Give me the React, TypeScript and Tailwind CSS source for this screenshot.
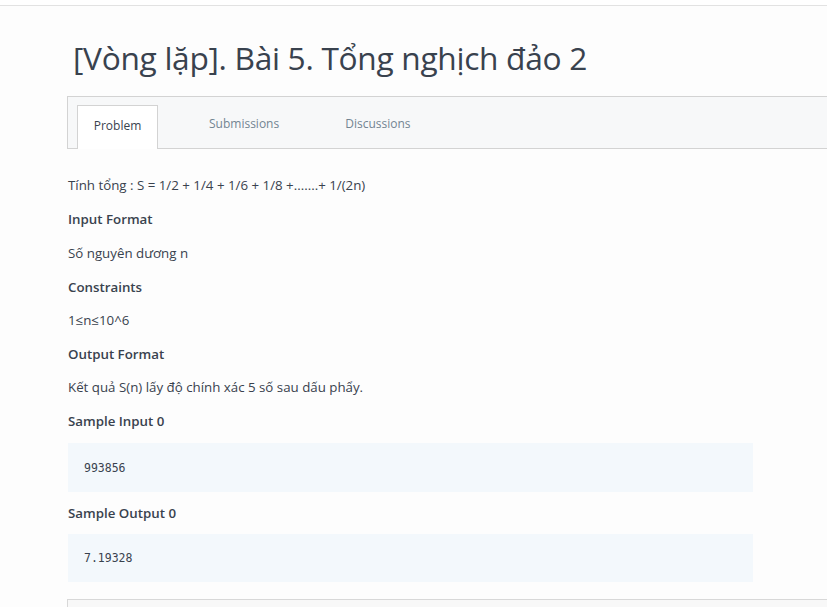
import React from "react";

const font = { fontFamily: '"Open Sans", "Noto Sans", sans-serif' };
const mono = { fontFamily: '"DejaVu Sans Mono", "Liberation Mono", monospace' };

export default function App() {
  return (
    <div className="w-[827px] h-[607px] overflow-hidden bg-[#fdfdfd] text-[#39424e]" style={font}>
      <div className="h-[6px] border-b border-[#e2e2e2] bg-white" />
      <h1 className="ml-[73px] mt-[30px] h-[44px] text-[31.7px] leading-[44px] font-normal tracking-[-0.3px] text-[#39424e]">
        [Vòng lặp]. Bài 5. Tổng nghịch đảo 2
      </h1>
      <div className="ml-[67px] mt-[16px] h-[53px] border-t border-l border-b border-[#d3d3d3] bg-[#f7f8f9] flex items-end pl-[9px]">
        <div className="w-[81px] h-[44px] -mb-px pb-[4px] bg-white border border-b-0 border-[#d3d3d3] flex items-center justify-center text-[12px] font-medium text-[#39424e]">
          Problem
        </div>
        <div className="h-[44px] pb-[4px] flex items-center ml-[51px] text-[12px] font-medium text-[#738592]">Submissions</div>
        <div className="h-[44px] pb-[4px] flex items-center ml-[66px] text-[12px] font-medium text-[#738592]">Discussions</div>
      </div>
      <div className="pl-[68px] pt-[23px] text-[13.3px] leading-[34px]">
        <p className="h-[30px] leading-[26px]">Tính tổng : S = 1/2 + 1/4 + 1/6 + 1/8 +.......+ 1/(2n)</p>
        <p className="h-[34px] leading-[34px] font-semibold">Input Format</p>
        <p className="h-[34px] leading-[34px]">Số nguyên dương n</p>
        <p className="h-[34px] leading-[34px] font-semibold">Constraints</p>
        <p className="h-[33px] leading-[33px]">1≤n≤10^6</p>
        <p className="h-[34px] leading-[34px] font-semibold">Output Format</p>
        <p className="h-[33px] leading-[33px]">Kết quả S(n) lấy độ chính xác 5 số sau dấu phẩy.</p>
        <p className="h-[34px] leading-[34px] font-semibold">Sample Input 0</p>
        <div className="mt-[5px] w-[685px] h-[49px] bg-[#f3f8fc] flex items-center pl-[16px] text-[11.5px] text-[#39424e]" style={mono}>
          993856
        </div>
        <p className="h-[42px] leading-[42px] font-semibold">Sample Output 0</p>
        <div className="w-[685px] h-[48px] bg-[#f3f8fc] flex items-center pl-[16px] text-[11.5px] text-[#39424e]" style={mono}>
          7.19328
        </div>
      </div>
      <div className="ml-[67px] mt-[17px] h-[20px] border-t border-l border-[#d8d8d8] bg-[#f8f8f8]" />
    </div>
  );
}
